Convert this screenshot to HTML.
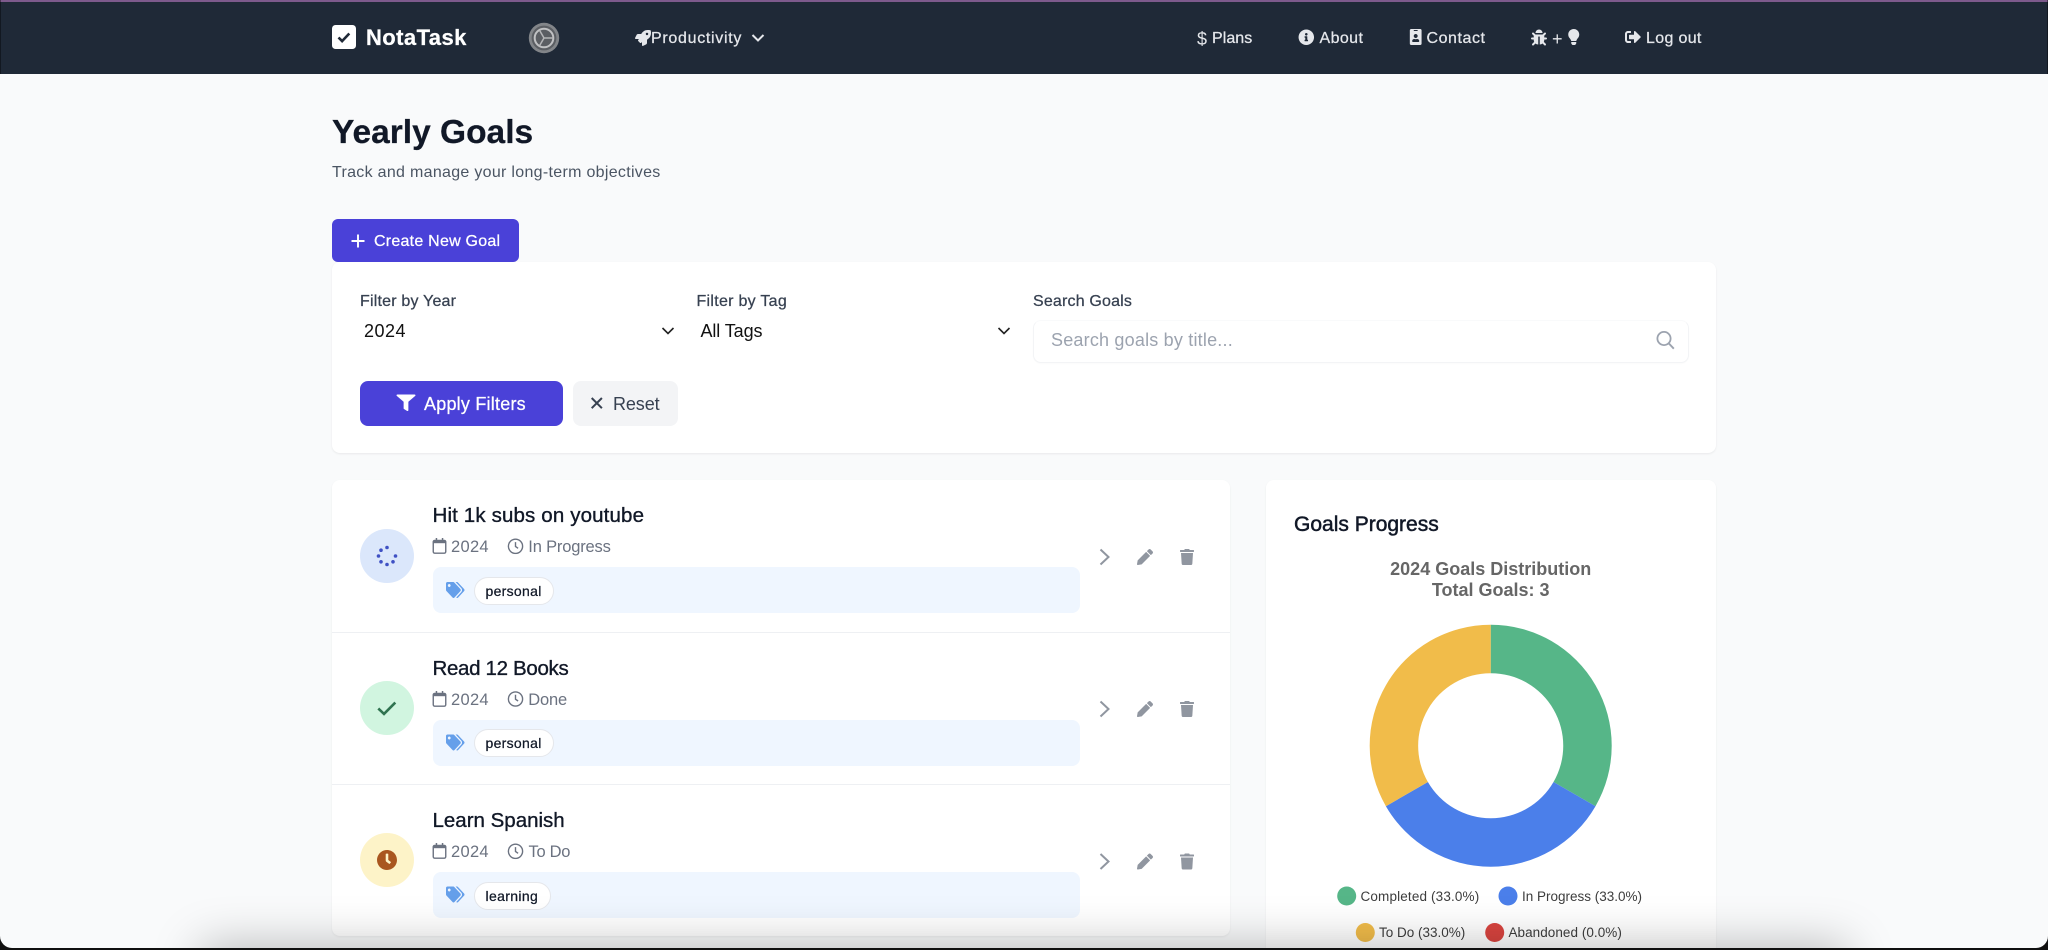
<!DOCTYPE html>
<html lang="en">
<head>
<meta charset="utf-8">
<title>Yearly Goals - NotaTask</title>
<style>
html,body{margin:0;padding:0;width:2048px;height:950px;overflow:hidden;background:#f9fafb;font-family:"Liberation Sans",Arial,sans-serif}
#p{position:relative;width:2048px;height:950px;overflow:hidden;background:#f9fafb}
.b{position:absolute;box-sizing:border-box}
.t{position:absolute;white-space:nowrap;line-height:24px;height:24px}
.m{-webkit-text-stroke:.25px currentColor}
nav{position:absolute;left:0;top:0;width:2048px;height:74px;background:#1f2937;border-top:2px solid #7d5a8c;box-sizing:border-box}
.nv{color:#e5e7eb;font-size:16px}
.meta{color:#6b7280;font-size:16.5px}
.ttl{color:#111827;font-size:20.5px;-webkit-text-stroke:.35px #111827}
.bar{background:#eff6ff;border-radius:8px;left:432.5px;width:647px;height:46px}
.pill{background:#fff;border:1px solid #e5e7eb;border-radius:14px;height:28px}
.circ{border-radius:50%;width:54px;height:54px;left:360px}
.leg{color:#3d3d3d;font-size:13.5px}
svg{position:absolute;left:0;top:0}
</style>
</head>
<body>
<div id="p">
<nav></nav>
<div class="t m" style="left:366px;top:26px;font-size:22px;font-weight:700;color:#fff;letter-spacing:.42px">NotaTask</div>
<div class="t nv m" style="left:651px;top:27px;letter-spacing:.7px">Productivity</div>
<div class="t nv" style="left:1197px;top:26.5px;font-size:18px">$</div>
<div class="t nv m" style="left:1212px;top:27px;letter-spacing:.05px">Plans</div>
<div class="t nv m" style="left:1319.5px;top:27px;letter-spacing:.4px">About</div>
<div class="t nv m" style="left:1426.5px;top:27px;letter-spacing:.55px">Contact</div>
<div class="t nv" style="left:1552px;top:26.5px;font-size:18px">+</div>
<div class="t nv m" style="left:1646px;top:27px;letter-spacing:.33px">Log out</div>

<h1 class="t" style="left:332px;top:115px;margin:0;font-size:33.5px;line-height:36px;height:36px;font-weight:700;color:#111827;-webkit-text-stroke:.25px #111827">Yearly Goals</h1>
<div class="t" style="left:332px;top:161.3px;font-size:16px;letter-spacing:.3px;color:#4b5563">Track and manage your long-term objectives</div>

<!-- filter card -->
<div class="b" style="left:332px;top:262px;width:1384px;height:191px;background:#fff;border-radius:8px;box-shadow:0 1px 2px rgba(0,0,0,.07)"></div>
<div class="b" style="left:332px;top:219px;width:187px;height:43px;background:#4a41d8;border-radius:6px"></div>
<div class="t m" style="left:374px;top:230.3px;font-size:16px;letter-spacing:.24px;color:#fff">Create New Goal</div>

<div class="t m" style="left:360px;top:289.8px;font-size:16px;letter-spacing:.2px;color:#374151">Filter by Year</div>
<div class="t" style="left:364px;top:319.2px;font-size:18px;letter-spacing:.5px;color:#111">2024</div>
<div class="t m" style="left:696.5px;top:289.8px;font-size:16px;letter-spacing:.28px;color:#374151">Filter by Tag</div>
<div class="t" style="left:700.5px;top:319.2px;font-size:18px;letter-spacing:-.1px;color:#111">All Tags</div>
<div class="t m" style="left:1033px;top:289.8px;font-size:16px;letter-spacing:.18px;color:#374151">Search Goals</div>
<div class="b" style="left:1033px;top:320px;width:656px;height:43px;background:#fff;border:1px solid #f3f4f6;border-top-color:#f9fafb;border-radius:8px;box-shadow:0 1px 1px rgba(0,0,0,.02)"></div>
<div class="t" style="left:1051px;top:328px;font-size:18px;letter-spacing:.2px;color:#9ca3af">Search goals by title...</div>

<div class="b" style="left:360px;top:380.5px;width:203px;height:45.5px;background:#4a41d8;border-radius:8px"></div>
<div class="t m" style="left:424px;top:391.5px;font-size:18px;letter-spacing:.22px;color:#fff">Apply Filters</div>
<div class="b" style="left:572.5px;top:380.5px;width:105.5px;height:45.5px;background:#f3f4f6;border-radius:8px"></div>
<div class="t" style="left:613px;top:391.5px;font-size:18px;letter-spacing:-.1px;color:#374151">Reset</div>

<!-- goals list -->
<div class="b" style="left:332px;top:480px;width:898px;height:456px;background:#fff;border-radius:8px;box-shadow:0 1px 2px rgba(0,0,0,.06)"></div>
<div class="b" style="left:332px;top:632px;width:898px;height:1px;background:#eef0f3"></div>
<div class="b" style="left:332px;top:784px;width:898px;height:1px;background:#eef0f3"></div>

<div class="b circ" style="top:529px;background:#dbe7fb"></div>
<div class="t ttl" style="left:432.5px;top:503.5px;letter-spacing:.14px">Hit 1k subs on youtube</div>
<div class="t meta" style="left:451px;top:535px;letter-spacing:.3px">2024</div>
<div class="t meta" style="left:528.3px;top:535px;letter-spacing:-.18px">In Progress</div>
<div class="b bar" style="top:567px"></div>
<div class="b pill" style="left:474px;top:577px;width:80px"></div>
<div class="t m" style="left:485.5px;top:579px;font-size:14px;letter-spacing:.3px;color:#111827">personal</div>

<div class="b circ" style="top:681px;background:#d1f5e0"></div>
<div class="t ttl" style="left:432.5px;top:656.5px;letter-spacing:-.33px">Read 12 Books</div>
<div class="t meta" style="left:451px;top:687.5px;letter-spacing:.3px">2024</div>
<div class="t meta" style="left:528.3px;top:687.5px;letter-spacing:-.2px">Done</div>
<div class="b bar" style="top:720px"></div>
<div class="b pill" style="left:474px;top:729px;width:80px"></div>
<div class="t m" style="left:485.5px;top:731px;font-size:14px;letter-spacing:.3px;color:#111827">personal</div>

<div class="b circ" style="top:833px;background:#fdf3c8"></div>
<div class="t ttl" style="left:432.5px;top:809px">Learn Spanish</div>
<div class="t meta" style="left:451px;top:840px;letter-spacing:.3px">2024</div>
<div class="t meta" style="left:528.5px;top:840px;letter-spacing:-.3px">To Do</div>
<div class="b bar" style="top:872px"></div>
<div class="b pill" style="left:473.5px;top:881.5px;width:77px"></div>
<div class="t m" style="left:485.5px;top:883.5px;font-size:14px;letter-spacing:.35px;color:#111827">learning</div>

<!-- chart card -->
<div class="b" style="left:1266px;top:480px;width:450px;height:480px;background:#fff;border-radius:8px;box-shadow:0 1px 2px rgba(0,0,0,.06)"></div>
<div class="t" style="left:1294px;top:513px;font-size:21px;color:#111827;-webkit-text-stroke:.5px #111827">Goals Progress</div>
<div class="t" style="left:1290.7px;width:400px;text-align:center;top:557px;font-size:18px;font-weight:700;color:#666">2024 Goals Distribution</div>
<div class="t" style="left:1290.7px;width:400px;text-align:center;top:578px;font-size:18px;font-weight:700;color:#666">Total Goals: 3</div>
<div class="t leg" style="left:1360.5px;top:885px;letter-spacing:.15px">Completed (33.0%)</div>
<div class="t leg" style="left:1522px;top:885px">In Progress (33.0%)</div>
<div class="t leg" style="left:1379px;top:921px">To Do (33.0%)</div>
<div class="t leg" style="left:1508.5px;top:921px;letter-spacing:.05px">Abandoned (0.0%)</div>

<svg width="2048" height="950" viewBox="0 0 2048 950" xmlns="http://www.w3.org/2000/svg">
<defs>
<symbol id="tags" viewBox="0 0 640 512" preserveAspectRatio="none"><path d="M497.941 225.941L286.059 14.059A48 48 0 0 0 252.118 0H48C21.49 0 0 21.49 0 48v204.118a48 48 0 0 0 14.059 33.941l211.882 211.882c18.744 18.745 49.136 18.746 67.882 0l204.118-204.118c18.745-18.745 18.745-49.137 0-67.882zM112 160c-26.51 0-48-21.49-48-48s21.49-48 48-48 48 21.49 48 48-21.49 48-48 48zm513.941 133.823L421.823 497.941c-18.745 18.745-49.137 18.745-67.882 0l-.36-.36L527.64 323.522c16.999-16.999 26.36-39.6 26.36-63.64s-9.362-46.641-26.36-63.64L331.397 0h48.721a48 48 0 0 1 33.941 14.059l211.882 211.882c18.745 18.745 18.745 49.137 0 67.882z"/></symbol>
<symbol id="pen" viewBox="0 0 512 512"><path d="M497.9 142.1l-46.1 46.1c-4.7 4.7-12.3 4.7-17 0l-111-111c-4.7-4.7-4.7-12.3 0-17l46.1-46.1c18.7-18.7 49.1-18.7 67.9 0l60.1 60.1c18.8 18.7 18.8 49.1 0 67.9zM284.2 99.8L21.6 362.4.4 483.9c-2.9 16.4 11.4 30.6 27.8 27.8l121.5-21.3 262.6-262.6c4.7-4.7 4.7-12.3 0-17l-111-111c-4.8-4.7-12.4-4.7-17.1 0z"/></symbol>
<symbol id="trash" viewBox="0 0 448 512"><path d="M432 32H312l-9.4-18.7A24 24 0 0 0 281.1 0H166.8a23.72 23.72 0 0 0-21.4 13.3L136 32H16A16 16 0 0 0 0 48v32a16 16 0 0 0 16 16h416a16 16 0 0 0 16-16V48a16 16 0 0 0-16-16zM53.2 467a48 48 0 0 0 47.9 45h245.8a48 48 0 0 0 47.9-45L416 128H32z"/></symbol>
<symbol id="cal" viewBox="0 0 14 16"><rect x=".75" y="2.4" width="12.5" height="12.8" rx="1.4" fill="none" stroke="#6b7280" stroke-width="1.4"/><rect x=".75" y="2.4" width="12.5" height="2.8" fill="#6b7280"/><rect x="3.2" y="0" width="1.5" height="3" fill="#6b7280"/><rect x="9.3" y="0" width="1.5" height="3" fill="#6b7280"/></symbol>
<symbol id="clk" viewBox="0 0 16 16"><circle cx="8" cy="8" r="7.1" fill="none" stroke="#6b7280" stroke-width="1.4"/><path d="M8 3.8V8.2L10.6 10" fill="none" stroke="#6b7280" stroke-width="1.4"/></symbol>
</defs>

<!-- logo -->
<rect x="332" y="25" width="24" height="24" rx="3.5" fill="#fff"/>
<path d="M338.5 37.5l3.6 3.6 7.2-7.6" fill="none" stroke="#1f2937" stroke-width="2.6"/>
<!-- gear -->
<circle cx="544" cy="38" r="15.2" fill="#8d8f92" opacity=".9"/>
<circle cx="544" cy="38" r="12.4" fill="#5b5e63"/>
<circle cx="544" cy="38" r="9.3" fill="none" stroke="#c0c1c3" stroke-width="2"/>
<path d="M544 38h9M544 38l-4.5-7.8M544 38l-4.5 7.8" stroke="#b5b6b8" stroke-width="1.5" fill="none"/>
<!-- rocket -->
<svg x="635" y="30" width="16" height="16" viewBox="0 0 512 512" fill="#e5e7eb"><path d="M505.12019,19.09375c-1.18945-5.53125-6.65819-11-12.207-12.1875C460.716,0,435.507,0,410.40747,0,307.17523,0,245.26909,55.20312,199.05238,128H94.83772c-16.34763.01562-35.55658,11.875-42.88664,26.48438L2.51562,253.29688A28.4,28.4,0,0,0,0,264a24.00867,24.00867,0,0,0,24.00582,24H127.81618l-22.47457,22.46875c-11.36521,11.36133-12.99607,32.25781,0,45.25L156.24582,406.625c11.15623,11.1875,32.15619,13.15625,45.27726,0l22.47457-22.46875V488a24.00867,24.00867,0,0,0,24.00581,24,28.55934,28.55934,0,0,0,10.707-2.51562l98.72834-49.39063c14.62888-7.29687,26.50776-26.5,26.50776-42.85937V312.79688c72.59753-46.3125,128.03493-108.40626,128.03493-211.09376C512.07526,76.5,512.07526,51.29688,505.12019,19.09375ZM384.04033,168A40,40,0,1,1,424.05,128,40.02322,40.02322,0,0,1,384.04033,168Z"/></svg>
<path d="M752.5 35l5.5 5.5 5.5-5.5" fill="none" stroke="#e5e7eb" stroke-width="2"/>
<!-- nav icons -->
<svg x="1298.3" y="29.3" width="16" height="16" viewBox="0 0 512 512" fill="#e5e7eb"><path d="M256 8C119.043 8 8 119.083 8 256c0 136.997 111.043 248 248 248s248-111.003 248-248C504 119.083 392.957 8 256 8zm0 110c23.196 0 42 18.804 42 42s-18.804 42-42 42-42-18.804-42-42 18.804-42 42-42zm56 254c0 6.627-5.373 12-12 12h-88c-6.627 0-12-5.373-12-12v-24c0-6.627 5.373-12 12-12h12v-64h-12c-6.627 0-12-5.373-12-12v-24c0-6.627 5.373-12 12-12h64c6.627 0 12 5.373 12 12v100h12c6.627 0 12 5.373 12 12v24z"/></svg>
<svg x="1409.7" y="29" width="12" height="16" viewBox="0 0 384 512" fill="#e5e7eb"><path d="M336 0H48C21.5 0 0 21.5 0 48v416c0 26.5 21.5 48 48 48h288c26.5 0 48-21.5 48-48V48c0-26.5-21.5-48-48-48zM144 32h96c8.8 0 16 7.2 16 16s-7.2 16-16 16h-96c-8.8 0-16-7.2-16-16s7.2-16 16-16zm48 128c35.3 0 64 28.7 64 64s-28.7 64-64 64-64-28.7-64-64 28.7-64 64-64zm112 236.8c0 10.6-10 19.2-22.4 19.2H102.4C90 416 80 407.4 80 396.8v-19.2c0-31.8 30.1-57.6 67.2-57.6h5c12.3 5.1 25.7 8 39.8 8s27.6-2.9 39.8-8h5c37.1 0 67.2 25.8 67.2 57.6v19.2z"/></svg>
<svg x="1531" y="29.5" width="16" height="16" viewBox="0 0 512 512" fill="#e5e7eb"><path d="M511.988 288.9c-.478 17.43-15.217 31.1-32.653 31.1H424v16c0 21.864-4.882 42.584-13.6 61.145l60.228 60.228c12.496 12.497 12.496 32.758 0 45.255-12.498 12.497-32.759 12.496-45.256 0l-54.736-54.736C345.886 467.965 314.351 480 280 480V236c0-6.627-5.373-12-12-12h-24c-6.627 0-12 5.373-12 12v244c-34.351 0-65.886-12.035-90.636-32.108l-54.736 54.736c-12.498 12.497-32.759 12.496-45.256 0-12.496-12.497-12.496-32.758 0-45.255l60.228-60.228C92.882 378.584 88 357.864 88 336v-16H32.666C15.23 320 .491 306.33.013 288.9-.484 270.816 14.028 256 32 256h56v-58.745l-46.628-46.628c-12.496-12.497-12.496-32.758 0-45.255 12.498-12.497 32.758-12.497 45.256 0L141.255 160h229.489l54.627-54.627c12.498-12.497 32.758-12.497 45.256 0 12.496 12.497 12.496 32.758 0 45.255L424 197.255V256h56c17.972 0 32.484 14.816 31.988 32.9zM257 0c-61.856 0-112 50.144-112 112h224C369 50.144 318.856 0 257 0z"/></svg>
<svg x="1568" y="29" width="11.5" height="16" viewBox="0 0 352 512" fill="#e5e7eb"><path d="M96.06 454.35c.01 6.29 1.87 12.45 5.36 17.69l17.09 25.69a31.99 31.99 0 0 0 26.64 14.28h61.71a31.99 31.99 0 0 0 26.64-14.28l17.09-25.69a31.989 31.989 0 0 0 5.36-17.69l.04-38.35H96.01l.05 38.35zM0 176c0 44.37 16.45 84.85 43.56 115.78 16.52 18.85 42.36 58.23 52.21 91.45.04.26.07.52.11.78h160.24c.04-.26.07-.51.11-.78 9.85-33.22 35.69-72.6 52.21-91.45C335.55 260.85 352 220.37 352 176 352 78.61 272.91-.3 175.45 0 73.44.31 0 82.97 0 176z"/></svg>
<svg x="1625" y="29" width="16" height="16" viewBox="0 0 512 512" fill="#e5e7eb"><path d="M497 273L329 441c-15 15-41 4.5-41-17v-96H152c-13.3 0-24-10.7-24-24v-96c0-13.3 10.7-24 24-24h136V88c0-21.4 25.9-32 41-17l168 168c9.3 9.4 9.3 24.6 0 34zM192 436v-40c0-6.6-5.4-12-12-12H96c-17.7 0-32-14.3-32-32V160c0-17.7 14.3-32 32-32h84c6.6 0 12-5.4 12-12V76c0-6.6-5.4-12-12-12H96c-53 0-96 43-96 96v192c0 53 43 96 96 96h84c6.6 0 12-5.4 12-12z"/></svg>

<!-- create plus -->
<path d="M358 234.5v13M351.5 241h13" stroke="#fff" stroke-width="1.9" fill="none"/>
<!-- select chevrons -->
<path d="M662.5 328l5.5 5.5 5.5-5.5M998.5 328l5.5 5.5 5.5-5.5" fill="none" stroke="#222" stroke-width="1.6"/>
<!-- search -->
<circle cx="1664" cy="338.5" r="6.6" fill="none" stroke="#9ca3af" stroke-width="1.8"/>
<path d="M1668.8 343.4l5 5.3" stroke="#9ca3af" stroke-width="1.9" fill="none"/>
<!-- filter -->
<svg x="396.5" y="394.5" width="19" height="16.5" viewBox="0 0 512 512" preserveAspectRatio="none" fill="#fff"><path d="M487.976 0H24.028C2.71 0-8.047 25.866 7.058 40.971L192 225.941V432c0 7.831 3.821 15.17 10.237 19.662l80 55.98C298.02 518.69 320 507.493 320 487.98V225.941l184.947-184.97C520.021 25.896 509.338 0 487.976 0z"/></svg>
<!-- reset x -->
<path d="M591.7 398l10.2 10.2M601.9 398l-10.2 10.2" stroke="#374151" stroke-width="2" fill="none"/>

<!-- row 1 spinner -->
<g fill="#3f51c4"><circle cx="387" cy="547.5" r="1.8"/><circle cx="395.5" cy="556" r="1.8"/><circle cx="387" cy="564.5" r="1.8"/><circle cx="378.5" cy="556" r="1.8"/><circle cx="381" cy="550.2" r="1.8"/><circle cx="393" cy="561.8" r="1.8"/><circle cx="381" cy="561.8" r="1.8"/></g>
<!-- row 2 check -->
<path d="M378.3 708.5l5.7 5.4 11.3-11.3" fill="none" stroke="#2f7350" stroke-width="2.6"/>
<!-- row 3 clock -->
<svg x="376.7" y="849.7" width="20.6" height="20.6" viewBox="0 0 512 512" fill="#a9561f"><path d="M256,8C119,8,8,119,8,256S119,504,256,504,504,393,504,256,393,8,256,8Zm92.49,313h0l-20,25a16,16,0,0,1-22.49,2.5h0l-67-49.72a40,40,0,0,1-15-31.23V112a16,16,0,0,1,16-16h32a16,16,0,0,1,16,16V256l58,42.5A16,16,0,0,1,348.49,321Z"/></svg>

<!-- meta icons -->
<use href="#cal" x="432.5" y="538" width="14" height="16"/>
<use href="#clk" x="507.5" y="538.3" width="16" height="16"/>
<use href="#cal" x="432.5" y="691" width="14" height="16"/>
<use href="#clk" x="507.5" y="691" width="16" height="16"/>
<use href="#cal" x="432.5" y="843" width="14" height="16"/>
<use href="#clk" x="507.5" y="843.3" width="16" height="16"/>

<!-- tag icons -->
<g fill="#659fea">
<use href="#tags" x="446" y="582" width="18.5" height="16"/>
<use href="#tags" x="446" y="734.5" width="18.5" height="16"/>
<use href="#tags" x="446" y="886.5" width="18.5" height="16"/>
</g>

<!-- actions -->
<g fill="none" stroke="#9096a0" stroke-width="2">
<path d="M1100.5 549.5l8 7.5-8 7.5"/>
<path d="M1100.5 701.5l8 7.5-8 7.5"/>
<path d="M1100.5 854l8 7.5-8 7.5"/>
</g>
<g fill="#9096a0">
<use href="#pen" x="1137" y="549" width="16" height="16"/>
<use href="#pen" x="1137" y="701" width="16" height="16"/>
<use href="#pen" x="1137" y="853.5" width="16" height="16"/>
<use href="#trash" x="1180" y="549" width="14" height="16"/>
<use href="#trash" x="1180" y="701" width="14" height="16"/>
<use href="#trash" x="1180" y="853.5" width="14" height="16"/>
</g>

<!-- donut -->
<path d="M1490.7 624.7A121 121 0 0 1 1595.5 806.2L1553.5 782A72.5 72.5 0 0 0 1490.7 673.2Z" fill="#56b688"/>
<path d="M1595.5 806.2A121 121 0 0 1 1385.9 806.2L1427.9 782A72.5 72.5 0 0 0 1553.5 782Z" fill="#4b7fea"/>
<path d="M1385.9 806.2A121 121 0 0 1 1490.7 624.7V673.2A72.5 72.5 0 0 0 1427.9 782Z" fill="#f1bc4a"/>
<!-- legend dots -->
<circle cx="1346.7" cy="896" r="9.5" fill="#56b688"/>
<circle cx="1508" cy="896" r="9.5" fill="#4b7fea"/>
<circle cx="1365.3" cy="932.5" r="9.5" fill="#f1bc4a"/>
<circle cx="1494.7" cy="932.5" r="9.5" fill="#d9443f"/>
</svg>

<!-- window shadow and frame -->
<div class="b" style="left:215px;width:1618px;top:960px;height:30px;box-shadow:0 0 48px 14px rgba(0,0,0,.27)"></div>
<div class="b" style="left:0;top:0;width:2048px;height:948px;border-radius:0 0 12px 12px;box-shadow:0 0 0 30px #101010"></div>
<div class="b" style="left:0;top:0;width:1px;height:74px;background:rgba(0,0,0,.4)"></div>
<div class="b" style="right:0;top:0;width:1px;height:74px;background:rgba(0,0,0,.4)"></div>
</div>
</body>
</html>
